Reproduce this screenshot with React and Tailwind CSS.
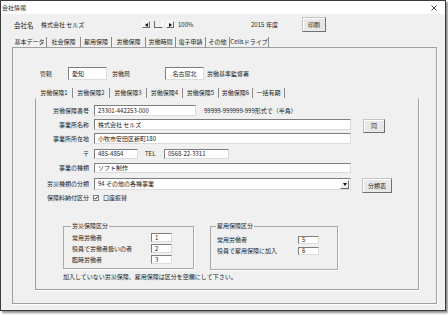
import React from "react";

function Box({ className = "", children }) {
  return (
    <div
      className={
        "bg-white border border-t-[#7e7e7e] border-l-[#7e7e7e] border-r-[#dcdcdc] border-b-[#dcdcdc] flex items-center px-[3px] shrink-0 whitespace-nowrap " +
        className
      }
    >
      {children}
    </div>
  );
}

function Btn({ className = "", children }) {
  return (
    <div
      className={
        "flex items-center justify-center bg-[#e8e8e8] border border-[#c4c4c4] border-r-[#707070] border-b-[#707070] shadow-[inset_1px_1px_0_#ffffff] shrink-0 " +
        className
      }
    >
      {children}
    </div>
  );
}

function Spin({ left, className = "" }) {
  return (
    <div
      className={
        "w-[8px] h-[7px] bg-[#f0f0f0] border border-[#ffffff] border-r-[#6a6a6a] border-b-[#6a6a6a] flex items-center justify-center shrink-0 " +
        className
      }
    >
      <svg width="3" height="4" viewBox="0 0 3 4">
        <path d={left ? "M3 0L0 2L3 4Z" : "M0 0L3 2L0 4Z"} fill="#111" />
      </svg>
    </div>
  );
}

const topTabs = [
  ["基本データ", "w-[34px]"],
  ["社会保険", "w-[34px]"],
  ["雇用保険", "w-[31px]"],
  ["労働保険", "w-[34px]"],
  ["労働時間", "w-[30px]"],
  ["電子申請", "w-[30px]"],
  ["その他", "w-[24px]"],
  ["Cellsドライブ", "w-[39px]"],
];

const subTabs = [
  ["労働保険1", "w-[37px]"],
  ["労働保険2", "w-[37px]"],
  ["労働保険3", "w-[37px]"],
  ["労働保険4", "w-[36px]"],
  ["労働保険5", "w-[36px]"],
  ["労働保険6", "w-[34px]"],
  ["一括有期", "w-[32px]"],
];

function Label({ children }) {
  return (
    <div className="w-[58px] pr-[5px] text-right shrink-0 whitespace-nowrap self-center">
      {children}
    </div>
  );
}

export default function App() {
  return (
    <div className="w-[448px] h-[315px] bg-white overflow-hidden font-['Noto_Sans_CJK_JP','Noto_Sans',sans-serif] text-[6px] leading-[8px] text-[#222]">
      <div className="w-[446px] h-[311px] bg-[#f0f0f0] border border-[#3a3a3a] shadow-[2px_2px_2px_rgba(0,0,0,0.45)] flex flex-col">
        {/* title bar */}
        <div className="h-[13px] bg-white flex items-center justify-between pl-[1px] pr-[8px] shrink-0">
          <span>会社情報</span>
          <svg width="6" height="6" viewBox="0 0 6 6">
            <path d="M0.5 0.5L5.5 5.5M5.5 0.5L0.5 5.5" stroke="#333" strokeWidth="0.9" />
          </svg>
        </div>

        {/* header row */}
        <div className="h-[15px] mt-[3px] flex items-center shrink-0 whitespace-nowrap">
          <span className="ml-[13px] w-[27px] shrink-0 text-[6.5px]">会社名</span>
          <span className="w-[101px] shrink-0">株式会社 セルズ</span>
          <Spin left />
          <div className="ml-[4px] w-[9px] h-[7px] border-l border-b border-[#6a6a6a] border-r border-r-[#ffffff] shrink-0" />
          <Spin className="ml-[3px]" />
          <span className="ml-[4px] w-[73px] shrink-0">100%</span>
          <span className="w-[15px] shrink-0">2015</span>
          <span className="w-[36px] shrink-0">年度</span>
          <Btn className="w-[24px] h-[15px]">印刷</Btn>
        </div>

        {/* top tabs */}
        <div className="h-[11px] mt-[4px] ml-[12px] flex items-center shrink-0">
          {topTabs.map(([t, w], i) => (
            <div
              key={i}
              className={
                w +
                " h-[10px] flex items-center justify-center border-r border-[#8a8a8a] whitespace-nowrap shrink-0"
              }
            >
              {t}
            </div>
          ))}
        </div>

        {/* main panel */}
        <div className="ml-[11px] w-[425px] h-[257px] border border-[#a0a0a0] shadow-[1px_1px_0_#ffffff] flex flex-col shrink-0">
          {/* 管轄 row */}
          <div className="mt-[19px] h-[13px] ml-[27px] flex items-center whitespace-nowrap">
            <span className="w-[28px] shrink-0">管轄</span>
            <Box className="w-[39px] h-[13px]">愛知</Box>
            <span className="w-[58px] pl-[5px] shrink-0">労働局</span>
            <Box className="w-[39px] h-[13px] justify-center">名古屋北</Box>
            <span className="pl-[3px]">労働基準監督署</span>
          </div>

          {/* sub tabs */}
          <div className="mt-[7px] h-[11px] ml-[23px] flex items-center">
            {subTabs.map(([t, w], i) => (
              <div
                key={i}
                className={
                  w +
                  " h-[10px] flex items-center justify-center border-r border-[#8a8a8a] whitespace-nowrap shrink-0"
                }
              >
                {t}
              </div>
            ))}
          </div>

          {/* inner panel */}
          <div className="ml-[22px] w-[384px] h-[192px] border border-[#a0a0a0] border-t-[#f0f0f0] shadow-[1px_1px_0_#ffffff] flex flex-col">
            <div className="mt-[6px] h-[11px] flex items-center whitespace-nowrap">
              <Label>労働保険番号</Label>
              <Box className="w-[102px] h-[11px]">23301-442253-000</Box>
              <span className="ml-[8px]">99999-999999-999形式で（半角）</span>
            </div>

            <div className="mt-[3px] h-[11px] flex items-start">
              <Label>事業所名称</Label>
              <Box className="w-[257px] h-[11px]">株式会社 セルズ</Box>
              <Btn className="ml-[12px] w-[22px] h-[14px]">同</Btn>
            </div>

            <div className="mt-[3px] h-[11px] flex items-start">
              <Label>事業所所在地</Label>
              <Box className="w-[257px] h-[11px]">小牧市安田区新町180</Box>
            </div>

            <div className="mt-[5px] h-[10px] flex items-center whitespace-nowrap">
              <Label>〒</Label>
              <Box className="w-[44px] h-[10px]">485-4854</Box>
              <span className="ml-[7px] w-[12px] shrink-0">TEL</span>
              <Box className="ml-[7px] w-[65px] h-[10px]">0568-22-3311</Box>
            </div>

            <div className="mt-[4px] h-[10px] flex items-center">
              <Label>事業の種類</Label>
              <Box className="w-[257px] h-[10px]">ソフト制作</Box>
            </div>

            <div className="mt-[5px] h-[12px] flex items-start">
              <Label>労災種類の分類</Label>
              <div className="w-[257px] h-[12px] bg-white border border-t-[#7e7e7e] border-l-[#7e7e7e] border-r-[#dcdcdc] border-b-[#dcdcdc] flex items-center shrink-0">
                <span className="pl-[3px] flex-1 whitespace-nowrap">94 その他の各種事業</span>
                <div className="w-[9px] h-[9px] mr-[1px] bg-[#f0f0f0] border border-[#ffffff] border-r-[#6a6a6a] border-b-[#6a6a6a] flex items-center justify-center">
                  <svg width="4" height="3" viewBox="0 0 4 3">
                    <path d="M0 0H4L2 3Z" fill="#111" />
                  </svg>
                </div>
              </div>
              <Btn className="ml-[11px] w-[30px] h-[15px]">分類表</Btn>
            </div>

            <div className="mt-[4px] h-[7px] flex items-center whitespace-nowrap">
              <Label>保険料納付区分</Label>
              <div className="ml-[-1px] w-[6px] h-[6px] bg-white border border-[#7e7e7e] flex items-center justify-center shrink-0">
                <svg width="4" height="4" viewBox="0 0 4 4">
                  <path d="M0.4 2L1.5 3.2L3.6 0.6" stroke="#111" strokeWidth="0.9" fill="none" />
                </svg>
              </div>
              <span className="ml-[4px]">口座振替</span>
            </div>

            {/* groups */}
            <div className="mt-[21px] flex items-start">
              <fieldset className="ml-[27px] w-[131px] h-[47px] border border-[#a9a9a9] shadow-[1px_1px_0_#ffffff] pl-[8px] shrink-0">
                <legend className="ml-[-1px] px-[1px] leading-[8px]">労災保険区分</legend>
                <div className="mt-[3px] flex flex-col gap-[2px]">
                  <div className="h-[9px] flex items-center">
                    <span className="w-[79px] shrink-0">常用労働者</span>
                    <Box className="w-[21px] h-[9px]">1</Box>
                  </div>
                  <div className="h-[9px] flex items-center">
                    <span className="w-[79px] shrink-0 whitespace-nowrap">役員で労働者扱いの者</span>
                    <Box className="w-[21px] h-[9px]">2</Box>
                  </div>
                  <div className="h-[9px] flex items-center">
                    <span className="w-[79px] shrink-0">臨時労働者</span>
                    <Box className="w-[21px] h-[9px]">3</Box>
                  </div>
                </div>
              </fieldset>

              <fieldset className="ml-[16px] w-[128px] h-[48px] border border-[#a9a9a9] shadow-[1px_1px_0_#ffffff] pl-[6px] shrink-0">
                <legend className="ml-[-1px] px-[1px] leading-[8px]">雇用保険区分</legend>
                <div className="mt-[6px] flex flex-col gap-[3px]">
                  <div className="h-[8px] flex items-center">
                    <span className="w-[81px] shrink-0">常用労働者</span>
                    <Box className="w-[21px] h-[8px]">5</Box>
                  </div>
                  <div className="h-[8px] flex items-center">
                    <span className="w-[81px] shrink-0 whitespace-nowrap">役員で雇用保険に加入</span>
                    <Box className="w-[21px] h-[8px]">6</Box>
                  </div>
                </div>
              </fieldset>
            </div>

            <div className="mt-[3px] ml-[27px] whitespace-nowrap">
              加入していない労災保険、雇用保険は区分を空欄にして下さい。
            </div>
          </div>
        </div>
      </div>
    </div>
  );
}
